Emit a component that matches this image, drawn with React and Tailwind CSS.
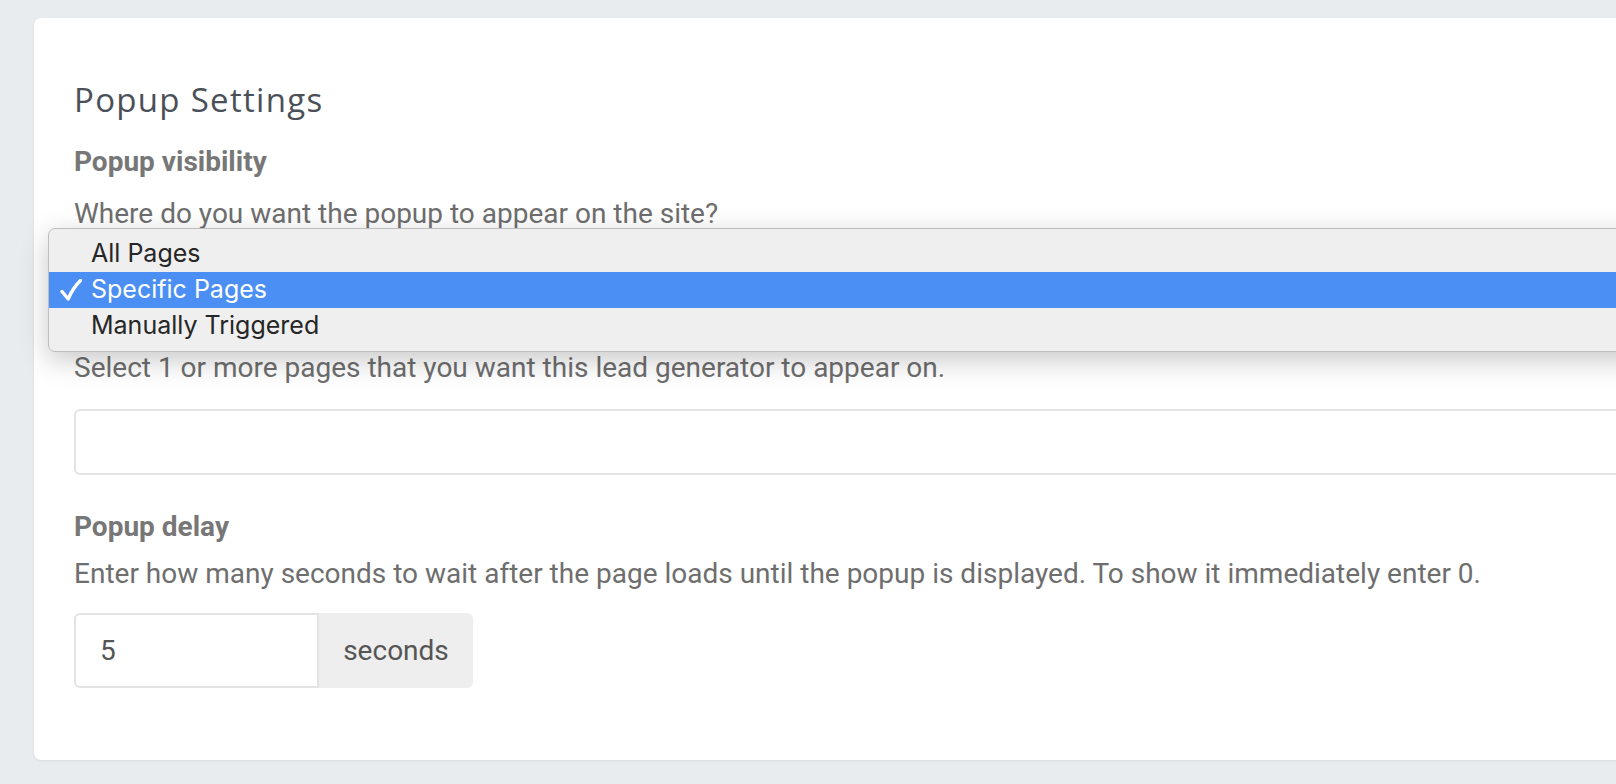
import React from "react";

function Check() {
  return (
    <svg width="22" height="22" viewBox="0 0 22 22" className="block">
      <path d="M2 12.5 L8.2 20 Q12.5 9.5 20.5 1.5" fill="none" stroke="#ffffff" strokeWidth="3.4" strokeLinecap="round" strokeLinejoin="round" />
    </svg>
  );
}

export default function App() {
  return (
    <div className="h-[784px] w-[1616px] overflow-hidden bg-[#e9ecef] pt-[18px] pl-[34px]">
      <div className="relative w-[1640px] rounded-[7px] bg-white pl-[40px] pt-[62px] pb-[72px] shadow-[0_1px_3px_rgba(0,0,0,0.07)]">
        <h2 className="font-['Open_Sans',sans-serif] text-[33px] leading-[40px] font-normal text-[#4b5058] tracking-[1.3px]">
          Popup Settings
        </h2>

        <div className="mt-[26px] font-['Roboto',sans-serif] text-[28px] leading-[32px] font-bold text-[#777777]">
          Popup visibility
        </div>
        <p className="mt-[20px] font-['Roboto',sans-serif] text-[28px] leading-[32px] text-[#6e6e6e]">
          Where do you want the popup to appear on the site?
        </p>

        <div className="mt-[10px] h-[66px] w-[1560px] rounded-[6px] border border-[#dddddd] bg-white" />

        <p className="mt-[46px] font-['Roboto',sans-serif] text-[28px] leading-[32px] text-[#6e6e6e]">
          Select 1 or more pages that you want this lead generator to appear on.
        </p>

        <div className="mt-[25px] h-[66px] w-[1560px] rounded-[6px] border-2 border-[#e3e3e3] bg-white" />

        <div className="mt-[36px] font-['Roboto',sans-serif] text-[28px] leading-[32px] font-bold text-[#777777]">
          Popup delay
        </div>
        <p className="mt-[15px] font-['Roboto',sans-serif] text-[28px] leading-[32px] text-[#6e6e6e]">
          Enter how many seconds to wait after the page loads until the popup is displayed. To show it immediately enter 0.
        </p>

        <div className="mt-[23px] flex h-[75px] w-[399px] font-['Roboto',sans-serif] text-[28px] text-[#555555]">
          <div className="flex w-[243px] items-center rounded-l-[6px] border-2 border-r-0 border-[#e3e3e3] bg-white pl-[24px]">
            5
          </div>
          <div className="flex w-[156px] items-center justify-center rounded-r-[6px] border-l-2 border-[#e3e3e3] bg-[#eeeeee]">
            seconds
          </div>
        </div>

        <div className="absolute left-[14px] top-[210px] w-[1620px] rounded-[7px] border border-[#bdbdbd] bg-[#efefef] py-[7px] font-['Inter',sans-serif] text-[25px] text-[#262626] shadow-[0_8px_28px_rgba(0,0,0,0.22)]">
          <div className="flex h-[36px] items-center pl-[42px]">All Pages</div>
          <div className="flex h-[36px] items-center bg-[#4b8ff5] text-white">
            <span className="ml-[11px] mr-[9px]">
              <Check />
            </span>
            Specific Pages
          </div>
          <div className="flex h-[36px] items-center pl-[42px]">Manually Triggered</div>
        </div>
      </div>
    </div>
  );
}
